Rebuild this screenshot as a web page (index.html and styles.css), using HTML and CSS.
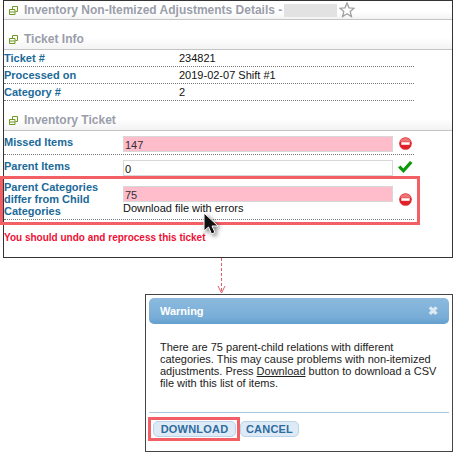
FILE: index.html
```html
<!DOCTYPE html>
<html>
<head>
	<meta charset="UTF-8">
	<title>Inventory Non-Itemized Adjustments Details</title>
	<link rel="stylesheet" href="styles.css">
</head>
<body>
	<div class="panel">
		<div class="head head-main">
			<svg class="win-icon" viewBox="0 0 9 9"><path d="M3.5 .5h5v5h-2M.5 3.5h5.500v5h-5.500zM3.500 3.500v-3M.5 6h5.500" fill="none" stroke="#6f9a22"/></svg>
			<span>Inventory Non-Itemized Adjustments Details -</span>
			<span class="redacted"></span>
			<svg class="star" viewBox="0 0 16 16"><path d="M8 1l2 4.800 5 .4-3.800 3.300 1.200 5L8 11.800 3.600 14.500l1.200-5L1 6.200l5-.4z" fill="#fff" stroke="#a0a0a0" stroke-width="1.300"/></svg>
		</div>

		<div class="head head-sub">
			<svg class="win-icon" viewBox="0 0 9 9"><path d="M3.5 .5h5v5h-2M.5 3.500h5.500v5h-5.500zM3.500 3.500v-3M.5 6h5.500" fill="none" stroke="#6f9a22"/></svg>
			<span>Ticket Info</span>
		</div>
		<div class="info-row"><span class="label">Ticket #</span><span>234821</span></div>
		<div class="info-row"><span class="label">Processed on</span><span>2019-02-07 Shift #1</span></div>
		<div class="info-row"><span class="label">Category #</span><span>2</span></div>

		<div class="head head-sub">
			<svg class="win-icon" viewBox="0 0 9 9"><path d="M3.5 .5h5v5h-2M.5 3.500h5.500v5h-5.500zM3.500 3.500v-3M.5 6h5.500" fill="none" stroke="#6f9a22"/></svg>
			<span>Inventory Ticket</span>
		</div>

		<div class="field-row row-missed">
			<span class="label">Missed Items</span>
			<div class="value"><div class="box box-bad">147</div></div>
			<svg class="status" viewBox="0 0 14 14"><circle cx="7" cy="7" r="6.800" fill="#e2222a"/><path d="M1 5a6.500 6.500 0 0 1 12 0z" fill="#f0757a"/><rect x="2.500" y="5.600" width="9" height="2.800" fill="#fff"/></svg>
		</div>
		<div class="field-row row-parent">
			<span class="label">Parent Items</span>
			<div class="value"><div class="box">0</div></div>
			<svg class="status-ok" viewBox="0 0 16 14"><path d="M1 7.500l2.500-2 2.800 3L13 1l2.500 2L6.500 13z" fill="#0a9a0a"/></svg>
		</div>
		<div class="field-row row-cats">
			<span class="label">Parent Categories differ from Child Categories</span>
			<div class="value">
				<div class="box box-bad">75</div>
				<div class="download-text">Download file with errors</div>
			</div>
			<svg class="status" viewBox="0 0 14 14"><circle cx="7" cy="7" r="6.800" fill="#e2222a"/><path d="M1 5a6.500 6.500 0 0 1 12 0z" fill="#f0757a"/><rect x="2.500" y="5.600" width="9" height="2.800" fill="#fff"/></svg>
			<div class="callout callout-row"></div>
		</div>
		<div class="undo-msg">You should undo and reprocess this ticket</div>

		<svg class="cursor" viewBox="0 0 18 24"><path d="M2 1v18l4.500-4 3 7 3.500-1.500-3-6.500h6z" fill="#111" stroke="#fff" stroke-width="1"/></svg>
	</div>

	<div class="connector">
		<svg viewBox="0 0 9 36"><path d="M4.500 0v34" stroke="#e0606a" stroke-dasharray="3 2" fill="none"/><path d="M1 28l3.500 7 3.500-7" stroke="#e0606a" fill="none"/></svg>
	</div>

	<div class="dialog">
		<div class="dialog-title">
			<span>Warning</span>
			<span class="dialog-close">&#10006;</span>
		</div>
		<p class="dialog-text">There are 75 parent-child relations with different categories. This may cause problems with non-itemized adjustments. Press <u>Download</u> button to download a CSV file with this list of items.</p>
		<div class="dialog-foot">
			<button type="button" class="btn btn-download">DOWNLOAD</button>
			<button type="button" class="btn btn-cancel">CANCEL</button>
			<div class="callout callout-btn"></div>
		</div>
	</div>
</body>
</html>
```

FILE: styles.css
```css
body {
	margin: 0;
	font-family: "Liberation Sans", Arial, sans-serif;
	font-size: 11px;
	color: #111;
	background: #fff;
}
.panel {
	position: relative;
	box-sizing: border-box;
	width: 450px;
	height: 258px;
	margin-left: 3px;
	border: 1px solid #333;
}
.head {
	display: flex;
	align-items: center;
	box-sizing: border-box;
	padding-left: 5px;
	font-size: 12px;
	font-weight: bold;
	color: #9a9eaa;
	border-bottom: 1px solid #c4c4c4;
	background: linear-gradient(#fff 60%, #f3f3f3);
}
.head-main {
	height: 19px;
}
.head-sub {
	height: 30px;
	padding-top: 9px;
}
.win-icon {
	width: 9px;
	height: 9px;
	margin-right: 6px;
	flex: none;
}
.redacted {
	width: 53px;
	height: 13px;
	margin-left: 2px;
	background: #e2e2e2;
}
.star {
	width: 16px;
	height: 16px;
	margin-left: 2px;
}
.label {
	font-weight: bold;
	color: #1b6a99;
}
.info-row {
	display: grid;
	grid-template-columns: 175px auto;
	box-sizing: border-box;
	width: 410px;
	height: 17px;
	line-height: 16px;
	border-bottom: 1px dotted #777;
}
.field-row {
	position: relative;
	display: grid;
	grid-template-columns: 119px 270px 20px;
	box-sizing: border-box;
	width: 410px;
	border-bottom: 1px dotted #777;
}
.field-row .label {
	line-height: 12px;
}
.row-missed, .row-parent {
	height: 24px;
	padding-top: 5px;
}
.row-cats {
	height: 41px;
	padding-top: 2px;
}
.row-cats .value {
	margin-top: 5px;
}
.box {
	box-sizing: border-box;
	height: 16px;
	padding-left: 1px;
	line-height: 16px;
	background: #fff;
	border: 1px solid #d8d8d8;
}
.box-bad {
	background: #ffbccb;
	color: #333;
}
.download-text {
	line-height: 13px;
}
.status {
	width: 13px;
	height: 13px;
	margin: 1px 0 0 6px;
}
.row-cats .status {
	margin-top: 12px;
}
.status-ok {
	width: 16px;
	height: 14px;
	margin-left: 4px;
}
.undo-msg {
	margin-top: 12px;
	font-size: 10px;
	font-weight: bold;
	color: #ee1035;
}
.callout {
	position: absolute;
	box-sizing: border-box;
	border: 3px solid #f25f65;
}
.callout-row {
	left: -4px;
	top: -3px;
	width: 420px;
	height: 49px;
}
.callout-btn {
	left: -1px;
	top: 4px;
	width: 92px;
	height: 24px;
}
.cursor {
	position: absolute;
	left: 198px;
	top: 211px;
	width: 18px;
	height: 24px;
	filter: drop-shadow(2px 2px 2px rgba(0, 0, 0, 0.5));
}
.connector {
	height: 36px;
	margin-left: 217px;
}
.connector svg {
	display: block;
	width: 9px;
	height: 36px;
}
.dialog {
	box-sizing: border-box;
	width: 308px;
	height: 158px;
	margin-left: 145px;
	padding: 3px;
	border: 1px solid #444;
}
.dialog-title {
	display: flex;
	justify-content: space-between;
	align-items: center;
	box-sizing: border-box;
	height: 26px;
	padding: 0 11px;
	font-size: 11px;
	font-weight: bold;
	color: #fff;
	border-radius: 5px;
	background: linear-gradient(#8dbade, #78add7 75%, #639fce);
}
.dialog-close {
	font-size: 12px;
	color: #dfe9f2;
}
.dialog-text {
	box-sizing: border-box;
	height: 88px;
	margin: 0;
	padding: 17px 11px 0;
	line-height: 12px;
	color: #222;
}
.dialog-foot {
	position: relative;
	display: flex;
	gap: 4px;
	box-sizing: border-box;
	height: 36px;
	padding: 8px 0 0 4px;
	border-top: 1px solid #a9c7df;
}
.btn {
	height: 16px;
	padding: 0;
	font-family: inherit;
	font-size: 11px;
	font-weight: bold;
	letter-spacing: 0.2px;
	color: #2f6c9e;
	background: #deebf7;
	border: 1px solid #b9d3e8;
	border-radius: 5px;
}
.btn-download {
	width: 83px;
}
.btn-cancel {
	width: 59px;
}
```
